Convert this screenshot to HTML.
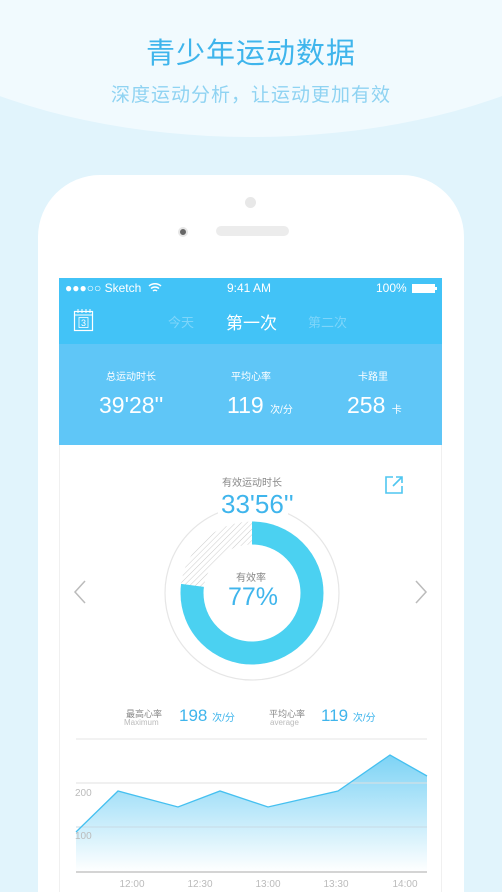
<!DOCTYPE html>
<html style="width:502px;height:892px;overflow:hidden"><head><meta charset="utf-8"><style>
*{margin:0;padding:0;box-sizing:border-box}
body{width:502px;height:892px;overflow:hidden;background:#e1f4fc;font-family:"Liberation Sans","Noto Sans CJK SC",sans-serif;position:relative}
.top{position:absolute;left:-180px;top:-300px;width:862px;height:437px;border-radius:50%;background:#f1fafe}
.t1{position:absolute;top:30px;width:100%;text-align:center;color:#3fb5ec;font-size:29px;letter-spacing:1px}
.t2{position:absolute;top:80px;width:100%;text-align:center;color:#8fd3f2;font-size:19px;letter-spacing:1px}
.phone{position:absolute;left:38px;top:175px;width:426px;height:717px;background:#fff;border-radius:62px 62px 0 0}
.abs{position:absolute}
.w{color:#fff}
</style></head><body>
<div class="top"></div>
<div class="t1">青少年运动数据</div>
<div class="t2">深度运动分析，让运动更加有效</div>
<div class="phone"></div>
<div class="abs" style="left:245px;top:197px;width:11px;height:11px;border-radius:50%;background:#e8e8e8"></div>
<div class="abs" style="left:178px;top:227px;width:10px;height:10px;border-radius:50%;background:#666;border:2px solid #e6e6e6"></div>
<div class="abs" style="left:216px;top:226px;width:73px;height:10px;border-radius:5px;background:#ececec"></div>
<div class="abs" style="left:59px;top:278px;width:383px;height:66px;background:#42c3f7"></div>
<div class="abs" style="left:59px;top:344px;width:383px;height:101px;background:#5fc6f7"></div>
<div class="abs" style="left:59px;top:445px;width:383px;height:447px;background:#fff;border-left:1px solid #f0f0f0;border-right:1px solid #f0f0f0"></div>
<div class="abs w" style="left:65px;top:281px;font-size:12px">●●●○○ Sketch</div>
<svg class="abs" style="left:148px;top:282px" width="14" height="11" viewBox="0 0 14 11"><path d="M1 4a9 9 0 0 1 12 0M3 6.5a6 6 0 0 1 8 0M5 9a3 3 0 0 1 4 0" stroke="#fff" stroke-width="1.5" fill="none"/></svg>
<div class="abs w" style="left:227px;top:281px;font-size:12px">9:41 AM</div>
<div class="abs w" style="left:376px;top:281px;font-size:12px">100%</div>
<div class="abs" style="left:412px;top:284px;width:23px;height:9px;background:#fff"></div>
<div class="abs" style="left:435px;top:287px;width:2px;height:3px;background:#fff"></div>
<svg class="abs" style="left:73px;top:308px" width="22" height="24" viewBox="0 0 22 24"><rect x="1.5" y="3.5" width="18" height="19" fill="none" stroke="#fff" stroke-width="1.2"/><line x1="1.5" y1="7" x2="19.5" y2="7" stroke="#fff"/><path d="M5 1v4M9 1v4M13 1v4M17 1v4" stroke="#fff"/><rect x="6" y="9.5" width="9" height="10" fill="none" stroke="#fff" stroke-width=".8"/><text x="10.5" y="18" font-size="9" fill="#fff" text-anchor="middle" font-family="Liberation Sans">3</text></svg>
<div class="abs" style="left:168px;top:312px;font-size:13px;color:#7dd5fa">今天</div>
<div class="abs w" style="left:226px;top:309px;font-size:17px">第一次</div>
<div class="abs" style="left:308px;top:312px;font-size:13px;color:#7dd5fa">第二次</div>
<div class="abs w" style="left:106px;top:368px;font-size:10px">总运动时长</div>
<div class="abs w" style="left:231px;top:368px;font-size:10px">平均心率</div>
<div class="abs w" style="left:358px;top:368px;font-size:10px">卡路里</div>
<div class="abs w" style="left:99px;top:392px;font-size:23px">39'28''</div>
<div class="abs w" style="left:227px;top:392px;font-size:23px">119 <span style="font-size:10px">次/分</span></div>
<div class="abs w" style="left:347px;top:392px;font-size:23px">258 <span style="font-size:10px">卡</span></div>
<div class="abs" style="left:222px;top:474px;font-size:10px;color:#888">有效运动时长</div>
<svg class="abs" style="left:384px;top:475px" width="20" height="20" viewBox="0 0 20 20"><path d="M9 2H2v16h16v-7M12 2h6v6M18 2L9 11" stroke="#4fc6f0" stroke-width="1.6" fill="none"/></svg>
<svg class="abs" style="left:150px;top:490px" width="204" height="210" viewBox="150 490 204 210">
<defs><pattern id="h" width="4" height="4" patternUnits="userSpaceOnUse" patternTransform="rotate(45)"><line x1="0" y1="0" x2="0" y2="4" stroke="#ccc" stroke-width="1"/></pattern></defs>
<circle cx="252" cy="593" r="87" fill="none" stroke="#e6e6e6" stroke-width="1.2"/>
<circle cx="252" cy="593" r="60" fill="none" stroke="url(#h)" stroke-width="23"/>
<circle cx="252" cy="593" r="60" fill="none" stroke="#4bd1f1" stroke-width="23" stroke-dasharray="290.3 400" transform="rotate(-90 252 593)"/>
<rect x="218" y="490" width="70" height="28" fill="#fff"/>
</svg>
<div class="abs" style="left:221px;top:491px;font-size:26px;line-height:1;color:#3fb5ec">33'56''</div>
<div class="abs" style="left:236px;top:569px;font-size:10px;color:#888">有效率</div>
<div class="abs" style="left:228px;top:585px;font-size:25px;line-height:1;color:#3fb5ec">77%</div>
<svg class="abs" style="left:73px;top:580px" width="14" height="24"><path d="M12 1L2 12l10 11" stroke="#bbb" stroke-width="1.5" fill="none"/></svg>
<svg class="abs" style="left:414px;top:580px" width="14" height="24"><path d="M2 1l10 11L2 23" stroke="#bbb" stroke-width="1.5" fill="none"/></svg>
<div class="abs" style="left:126px;top:707px;font-size:9px;color:#888">最高心率</div>
<div class="abs" style="left:124px;top:718px;font-size:8px;color:#bbb">Maximum</div>
<div class="abs" style="left:179px;top:706px;font-size:17px;color:#3fb5ec">198 <span style="font-size:10px">次/分</span></div>
<div class="abs" style="left:269px;top:707px;font-size:9px;color:#888">平均心率</div>
<div class="abs" style="left:270px;top:718px;font-size:8px;color:#bbb">average</div>
<div class="abs" style="left:321px;top:706px;font-size:17px;color:#3fb5ec">119 <span style="font-size:10px">次/分</span></div>
<svg class="abs" style="left:0;top:730px" width="502" height="162" viewBox="0 730 502 162">
<defs><linearGradient id="g" x1="0" y1="0" x2="0" y2="1"><stop offset="0" stop-color="#7dd3f5"/><stop offset="1" stop-color="#fff"/></linearGradient></defs>
<line x1="76" y1="739" x2="427" y2="739" stroke="#e4e4e4"/>
<path d="M76 832L118 791L178 807L220 791L268 807L338 791L390 755L427 776V872H76Z" fill="url(#g)"/>
<line x1="76" y1="783" x2="427" y2="783" stroke="#e0e0e0"/>
<line x1="76" y1="827" x2="427" y2="827" stroke="#c8dbe4"/>
<path d="M76 832L118 791L178 807L220 791L268 807L338 791L390 755L427 776" fill="none" stroke="#45c0f0" stroke-width="1.3"/>
<line x1="76" y1="872" x2="427" y2="872" stroke="#d4d4d4" stroke-width="2"/>
<g font-size="10" fill="#bbb" font-family="Liberation Sans"><text x="75" y="796">200</text><text x="75" y="839">100</text>
<text x="132" y="887" text-anchor="middle">12:00</text><text x="200" y="887" text-anchor="middle">12:30</text><text x="268" y="887" text-anchor="middle">13:00</text><text x="336" y="887" text-anchor="middle">13:30</text><text x="405" y="887" text-anchor="middle">14:00</text></g>
</svg>
</body></html>
